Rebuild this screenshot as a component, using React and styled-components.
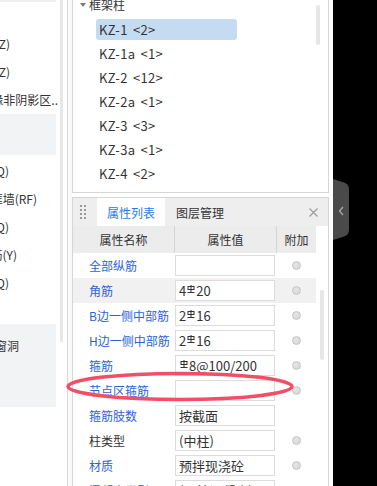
import React from 'react';
import styled, { createGlobalStyle } from 'styled-components';

// STYLES
const GlobalStyle = createGlobalStyle`
  html, body { margin: 0; padding: 0; background: #fff; }
  body { font-family: "Noto Sans CJK SC", "Noto Sans", sans-serif; color: #333; }
`;

const Page = styled.div`
  position: relative;
  display: flex;
  width: 377px;
  height: 486px;
  overflow: hidden;
  background: #fff;
`;

// left component list (scrolled out to the left)
const LeftPane = styled.div`display: flex; width: 67px; flex-shrink: 0; border-right: 1px solid #d9d9d9;`;
const LeftList = styled.div`width: 60px; display: flex; flex-direction: column; font-size: 12px; color: #333;`;
const TopStrip = styled.div`height: 2px; width: 56px; background: #eff0f2; margin-bottom: 28px;`;
const LeftItem = styled.div`
  height: ${p => p.h || 28}px;
  width: ${p => p.end}px;
  display: flex;
  align-items: center;
  justify-content: flex-end;
  overflow: hidden;
  white-space: nowrap;
  & > span { flex-shrink: 0; line-height: 16px; }
`;
const Band = styled.div`
  width: 56px;
  height: ${p => p.h}px;
  margin: ${p => p.m};
  background: #f2f3f5;
`;
const ScrollTrack = styled.div`width: 7px;`;
const LeftThumb = styled.div`width: 3px; height: 342px; background: #e7e7e7; border-radius: 0 0 2px 2px;`;
const Splitter = styled.div`width: 4px; flex-shrink: 0; background: #fafafa;`;

// middle column
const Main = styled.div`
  width: 261px;
  flex-shrink: 0;
  padding-right: 4px;
  box-sizing: border-box;
  display: flex;
  flex-direction: column;
`;
const TreeBox = styled.div`
  position: relative;
  height: 193px;
  flex-shrink: 0;
  box-sizing: border-box;
  border: 1px solid #d6d6d6;
  border-top: none;
  margin-bottom: 4px;
`;
const TreeHead = styled.div`
  height: 10px;
  display: flex;
  align-items: center;
  padding-left: 7px;
  gap: 3px;
  font-size: 12px;
  line-height: 16px;
`;
const Caret = styled.span`
  width: 0; height: 0;
  border-left: 3px solid transparent;
  border-right: 3px solid transparent;
  border-top: 4px solid #7a7a7a;
`;
const TreeList = styled.div`padding-top: 7px; margin-left: 23px;`;
const TreeItem = styled.div`height: 24px; display: flex; align-items: center;`;
const ItemLabel = styled.div`
  width: 141px;
  height: 21px;
  box-sizing: border-box;
  padding-left: 3px;
  border-radius: 3px;
  background: ${p => (p.selected ? '#c4dbf1' : 'transparent')};
  font-size: 13px;
  line-height: 21px;
  letter-spacing: 0.3px;
  word-spacing: 2px;
  white-space: pre;
  color: #333;
`;
const Thumb = styled.div`
  position: absolute;
  left: ${p => p.x}px;
  top: ${p => p.y}px;
  width: 4px;
  height: ${p => p.h}px;
  border-radius: 2px;
  background: #e6e6e6;
`;

const PropBox = styled.div`
  position: relative;
  flex: 1;
  border: 1px solid #d6d6d6;
  border-bottom: none;
`;
const TabBar = styled.div`display: flex; height: 28px; background: #eeeeee;`;
const Grip = styled.div`
  width: 24px;
  box-sizing: border-box;
  padding: 7px 0 0 7px;
  display: grid;
  grid-template-columns: 2px 2px;
  grid-auto-rows: 2px;
  column-gap: 2px;
  row-gap: 2px;
  align-content: start;
  & > i { background: #9a9a9a; }
`;
const Tab = styled.div`
  display: flex;
  align-items: center;
  justify-content: ${p => (p.active ? 'center' : 'flex-start')};
  width: ${p => (p.active ? '68px' : 'auto')};
  padding-left: ${p => (p.active ? 0 : 11)}px;
  background: ${p => (p.active ? '#fff' : 'transparent')};
  color: ${p => (p.active ? '#2b7ae0' : '#333')};
  font-size: 12px;
`;
const Close = styled.div`margin-left: auto; margin-right: 10px; display: flex; align-items: center;`;

const Grid = styled.div`
  display: grid;
  grid-template-columns: 102px 102px 39px;
  width: 243px;
  height: ${p => p.h}px;
  background: ${p => p.bg || 'transparent'};
  font-size: 12px;
`;
const HeadCell = styled.div`
  display: flex;
  align-items: center;
  justify-content: center;
  border-right: ${p => (p.last ? 'none' : '1px solid #d4d4d4')};
`;
const NameCell = styled.div`
  display: flex;
  align-items: center;
  padding-left: 16px;
  color: ${p => (p.plain ? '#333' : '#2d62d8')};
  white-space: nowrap;
`;
const ValueCell = styled.div`display: flex; align-items: center;`;
const ValueBox = styled.div`
  width: 100px;
  height: 21px;
  box-sizing: border-box;
  border: 1px solid #dcdcdc;
  background: #fff;
  padding-left: 3px;
  display: flex;
  align-items: center;
  font-size: 13px;
  color: #333;
  white-space: nowrap;
`;
const AddCell = styled.div`display: flex; align-items: center; justify-content: center;`;
const Radio = styled.span`
  width: 9px;
  height: 9px;
  box-sizing: border-box;
  border-radius: 50%;
  border: 1px solid #c6c6c6;
  background: radial-gradient(circle at 40% 40%, #e6e6e6, #d2d2d2);
`;

const Mark = styled.svg`position: absolute; left: 66px; top: 370px; pointer-events: none;`;

const SidePanel = styled.div`width: 44px; flex-shrink: 0; background: #000; padding-top: 179px; box-sizing: border-box;`;

const Bar = styled.svg`align-self: flex-start; margin: 4px 1px 0 1px;`;

function Rebar() {
  return (
    <Bar width="8" height="8" viewBox="0 0 8 8" fill="none" stroke="#333" strokeWidth="1">
      <rect x="1" y="1.5" width="6" height="3" />
      <line x1="4" y1="0" x2="4" y2="7.5" />
      <line x1="0.5" y1="7.5" x2="7.5" y2="7.5" />
    </Bar>
  );
}

const leftItems = [
  { t: '构造柱(GZ)', end: 10 },
  { t: '砌体柱(Z)', end: 10 },
  { t: '约束边缘非阴影区..', end: 58 },
];
const leftItems2 = [
  { t: '剪力墙(Q)', end: 9 },
  { t: '人防门框墙(RF)', end: 37 },
  { t: '砌体墙(Q)', end: 9 },
  { t: '砌体加筋(Y)', end: 17 },
  { t: '保温墙(Q)', end: 9 },
];

const columns = ['KZ-1 <2>', 'KZ-1a <1>', 'KZ-2 <12>', 'KZ-2a <1>', 'KZ-3 <3>', 'KZ-3a <1>', 'KZ-4 <2>'];

const R = <Rebar />;
const props = [
  { name: '全部纵筋', value: '' },
  { name: '角筋', value: <>4{R}20</>, hover: true },
  { name: 'B边一侧中部筋', value: <>2{R}16</> },
  { name: 'H边一侧中部筋', value: <>2{R}16</> },
  { name: '箍筋', value: <>{R}8@100/200</> },
  { name: '节点区箍筋', value: '' },
  { name: '箍筋肢数', value: '按截面', noRadio: true },
  { name: '柱类型', value: '(中柱)', plain: true },
  { name: '材质', value: '预拌现浇砼' },
  { name: '混凝土类型', value: '(预拌混凝土)' },
];

export default function App() {
  return (
    <Page>
      <GlobalStyle />

      <LeftPane>
        <LeftList>
          <TopStrip />
          {leftItems.map(i => (
            <LeftItem key={i.t} end={i.end}><span>{i.t}</span></LeftItem>
          ))}
          <Band h={41} m="0 0 2px 0" />
          {leftItems2.map(i => (
            <LeftItem key={i.t} end={i.end}><span>{i.t}</span></LeftItem>
          ))}
          <Band h={83} m="27px 0 0 0">
            <LeftItem end={19} h={44}><span>门窗洞</span></LeftItem>
          </Band>
        </LeftList>
        <ScrollTrack>
          <LeftThumb />
        </ScrollTrack>
      </LeftPane>
      <Splitter />

      <Main>
        <TreeBox>
          <TreeHead><Caret />框架柱</TreeHead>
          <TreeList>
            {columns.map((c, i) => (
              <TreeItem key={c}>
                <ItemLabel selected={i === 0}>{c}</ItemLabel>
              </TreeItem>
            ))}
          </TreeList>
          <Thumb x={243} y={5} h={40} />
        </TreeBox>

        <PropBox>
          <TabBar>
            <Grip>{Array.from({ length: 8 }).map((_, i) => <i key={i} />)}</Grip>
            <Tab active>属性列表</Tab>
            <Tab>图层管理</Tab>
            <Close>
              <svg width="9" height="9" viewBox="0 0 9 9" stroke="#9a9a9a" strokeWidth="1.1">
                <line x1="0.5" y1="0.5" x2="8.5" y2="8.5" />
                <line x1="8.5" y1="0.5" x2="0.5" y2="8.5" />
              </svg>
            </Close>
          </TabBar>

          <Grid h={27} bg="#ececec">
            <HeadCell>属性名称</HeadCell>
            <HeadCell>属性值</HeadCell>
            <HeadCell last>附加</HeadCell>
          </Grid>

          {props.map(p => (
            <Grid key={p.name} h={25} bg={p.hover ? '#f1f1f1' : undefined}>
              <NameCell plain={p.plain}>{p.name}</NameCell>
              <ValueCell><ValueBox>{p.value}</ValueBox></ValueCell>
              <AddCell>{!p.noRadio && <Radio />}</AddCell>
            </Grid>
          ))}
          <Thumb x={247} y={92} h={70} />
        </PropBox>
      </Main>

      <SidePanel>
        <svg width="16" height="61" viewBox="0 0 16 61">
          <path d="M0 0 L11 3.5 Q16 5 16 10 L16 51 Q16 56 11 57.5 L0 61 Z" fill="#4a4a4a" />
          <polyline points="10,28 6.5,32 10,36" fill="none" stroke="#a8a8a8" strokeWidth="1.3" />
        </svg>
      </SidePanel>

      <Mark width="232" height="34" viewBox="0 0 232 34">
        <ellipse cx="114" cy="16.5" rx="112" ry="13" fill="none" stroke="#f24f66" strokeWidth="3.5" />
      </Mark>
    </Page>
  );
}
